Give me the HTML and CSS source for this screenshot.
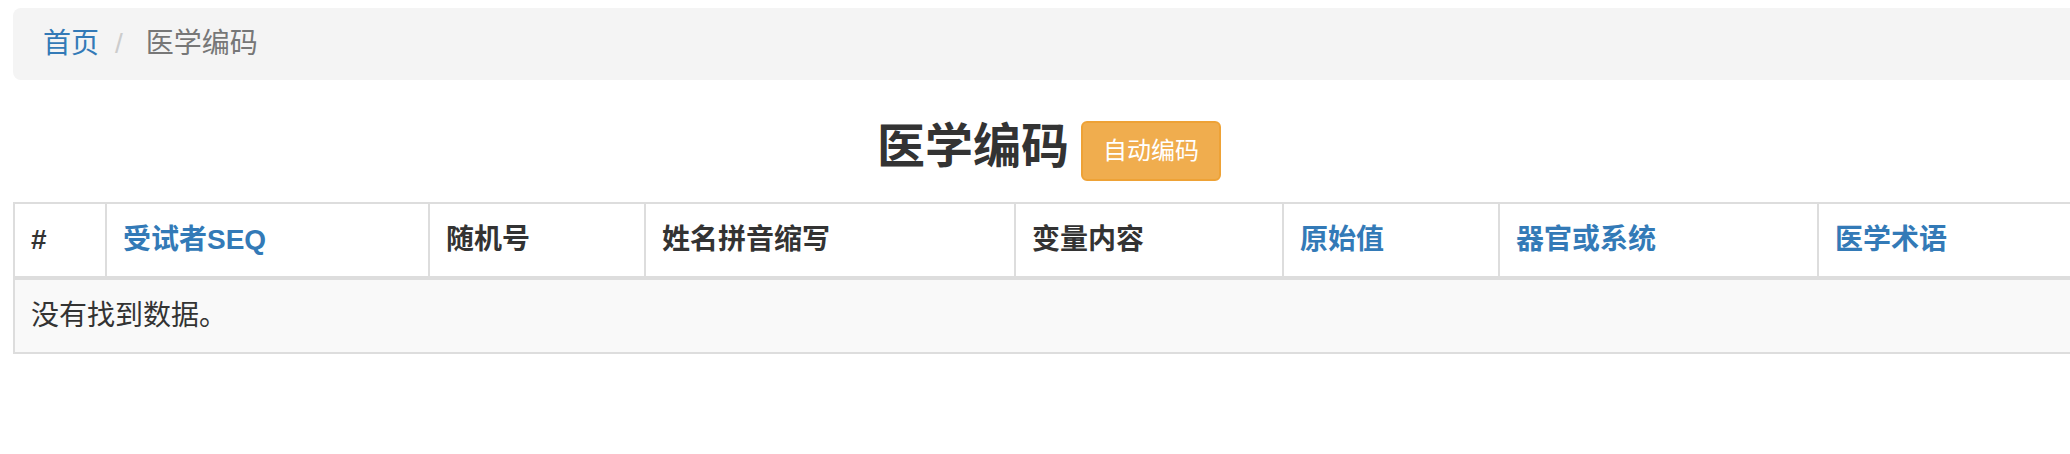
FILE: index.html
```html
<!DOCTYPE html>
<html lang="zh-CN">
<head>
    <meta charset="UTF-8">
    <title>医学编码</title>
    <link rel="stylesheet" href="styles.css">
</head>
<body>
<div class="page">
    <ol class="breadcrumb">
        <li><a href="#">首页</a></li>
        <li class="sep">/</li>
        <li class="active">医学编码</li>
    </ol>

    <div class="title-row">
        <h3 class="title">医学编码</h3>
        <button class="btn btn-warning" type="button">自动编码</button>
    </div>

    <table class="data-table">
        <thead>
        <tr>
            <th class="c-idx">#</th>
            <th class="c-seq"><a href="#">受试者SEQ</a></th>
            <th class="c-rand">随机号</th>
            <th class="c-name">姓名拼音缩写</th>
            <th class="c-var">变量内容</th>
            <th class="c-raw"><a href="#">原始值</a></th>
            <th class="c-organ"><a href="#">器官或系统</a></th>
            <th class="c-term"><a href="#">医学术语</a></th>
        </tr>
        </thead>
        <tbody>
        <tr class="empty">
            <td colspan="8">没有找到数据。</td>
        </tr>
        </tbody>
    </table>
</div>
</body>
</html>
```

FILE: styles.css
```css
* {
    margin: 0;
    padding: 0;
    box-sizing: border-box;
}

html {
    overflow: hidden;
}

body {
    font-family: "Liberation Sans", "Noto Sans CJK SC", sans-serif;
    font-size: 28px;
    line-height: 40px;
    color: #333;
    background-color: #fff;
}

a {
    color: #337ab7;
    text-decoration: none;
}

.page {
    width: 2072px;
    margin-left: 13px;
    padding-top: 8px;
}

/* 面包屑 */
.breadcrumb {
    display: flex;
    list-style: none;
    padding: 16px 30px;
    background-color: #f4f4f4;
    border-radius: 8px;
}

.breadcrumb .sep {
    color: #ccc;
    margin: 0 23px 0 16px;
}

.breadcrumb .active {
    color: #777;
}

/* 标题 */
.title-row {
    display: flex;
    justify-content: center;
    align-items: center;
    gap: 12px;
    margin: 40px 0 20px;
    height: 62px;
}

.title {
    font-size: 48px;
    line-height: 53px;
    font-weight: bold;
    color: #333;
    padding-bottom: 10px;
}

.btn {
    font-family: inherit;
    font-size: 24px;
    line-height: 36px;
    padding: 10px 20px;
    border: 2px solid transparent;
    border-radius: 6px;
    cursor: pointer;
}

.btn-warning {
    color: #fff;
    background-color: #f0ad4e;
    border-color: #eea236;
}

/* 表格 */
.data-table {
    width: 2072px;
    table-layout: fixed;
    border-collapse: collapse;
    border: 2px solid #ddd;
}

.data-table th,
.data-table td {
    padding: 16px;
    text-align: left;
    border: 2px solid #ddd;
    line-height: 40px;
}

.data-table th {
    font-weight: bold;
    border-bottom-width: 4px;
    vertical-align: bottom;
}

.data-table th a {
    font-weight: bold;
}

.c-idx { width: 92px; }
.c-seq { width: 323px; }
.c-rand { width: 216px; }
.c-name { width: 370px; }
.c-var { width: 268px; }
.c-raw { width: 216px; }
.c-organ { width: 319px; }
.c-term { width: 268px; }

.empty td {
    background-color: #f9f9f9;
}
```
